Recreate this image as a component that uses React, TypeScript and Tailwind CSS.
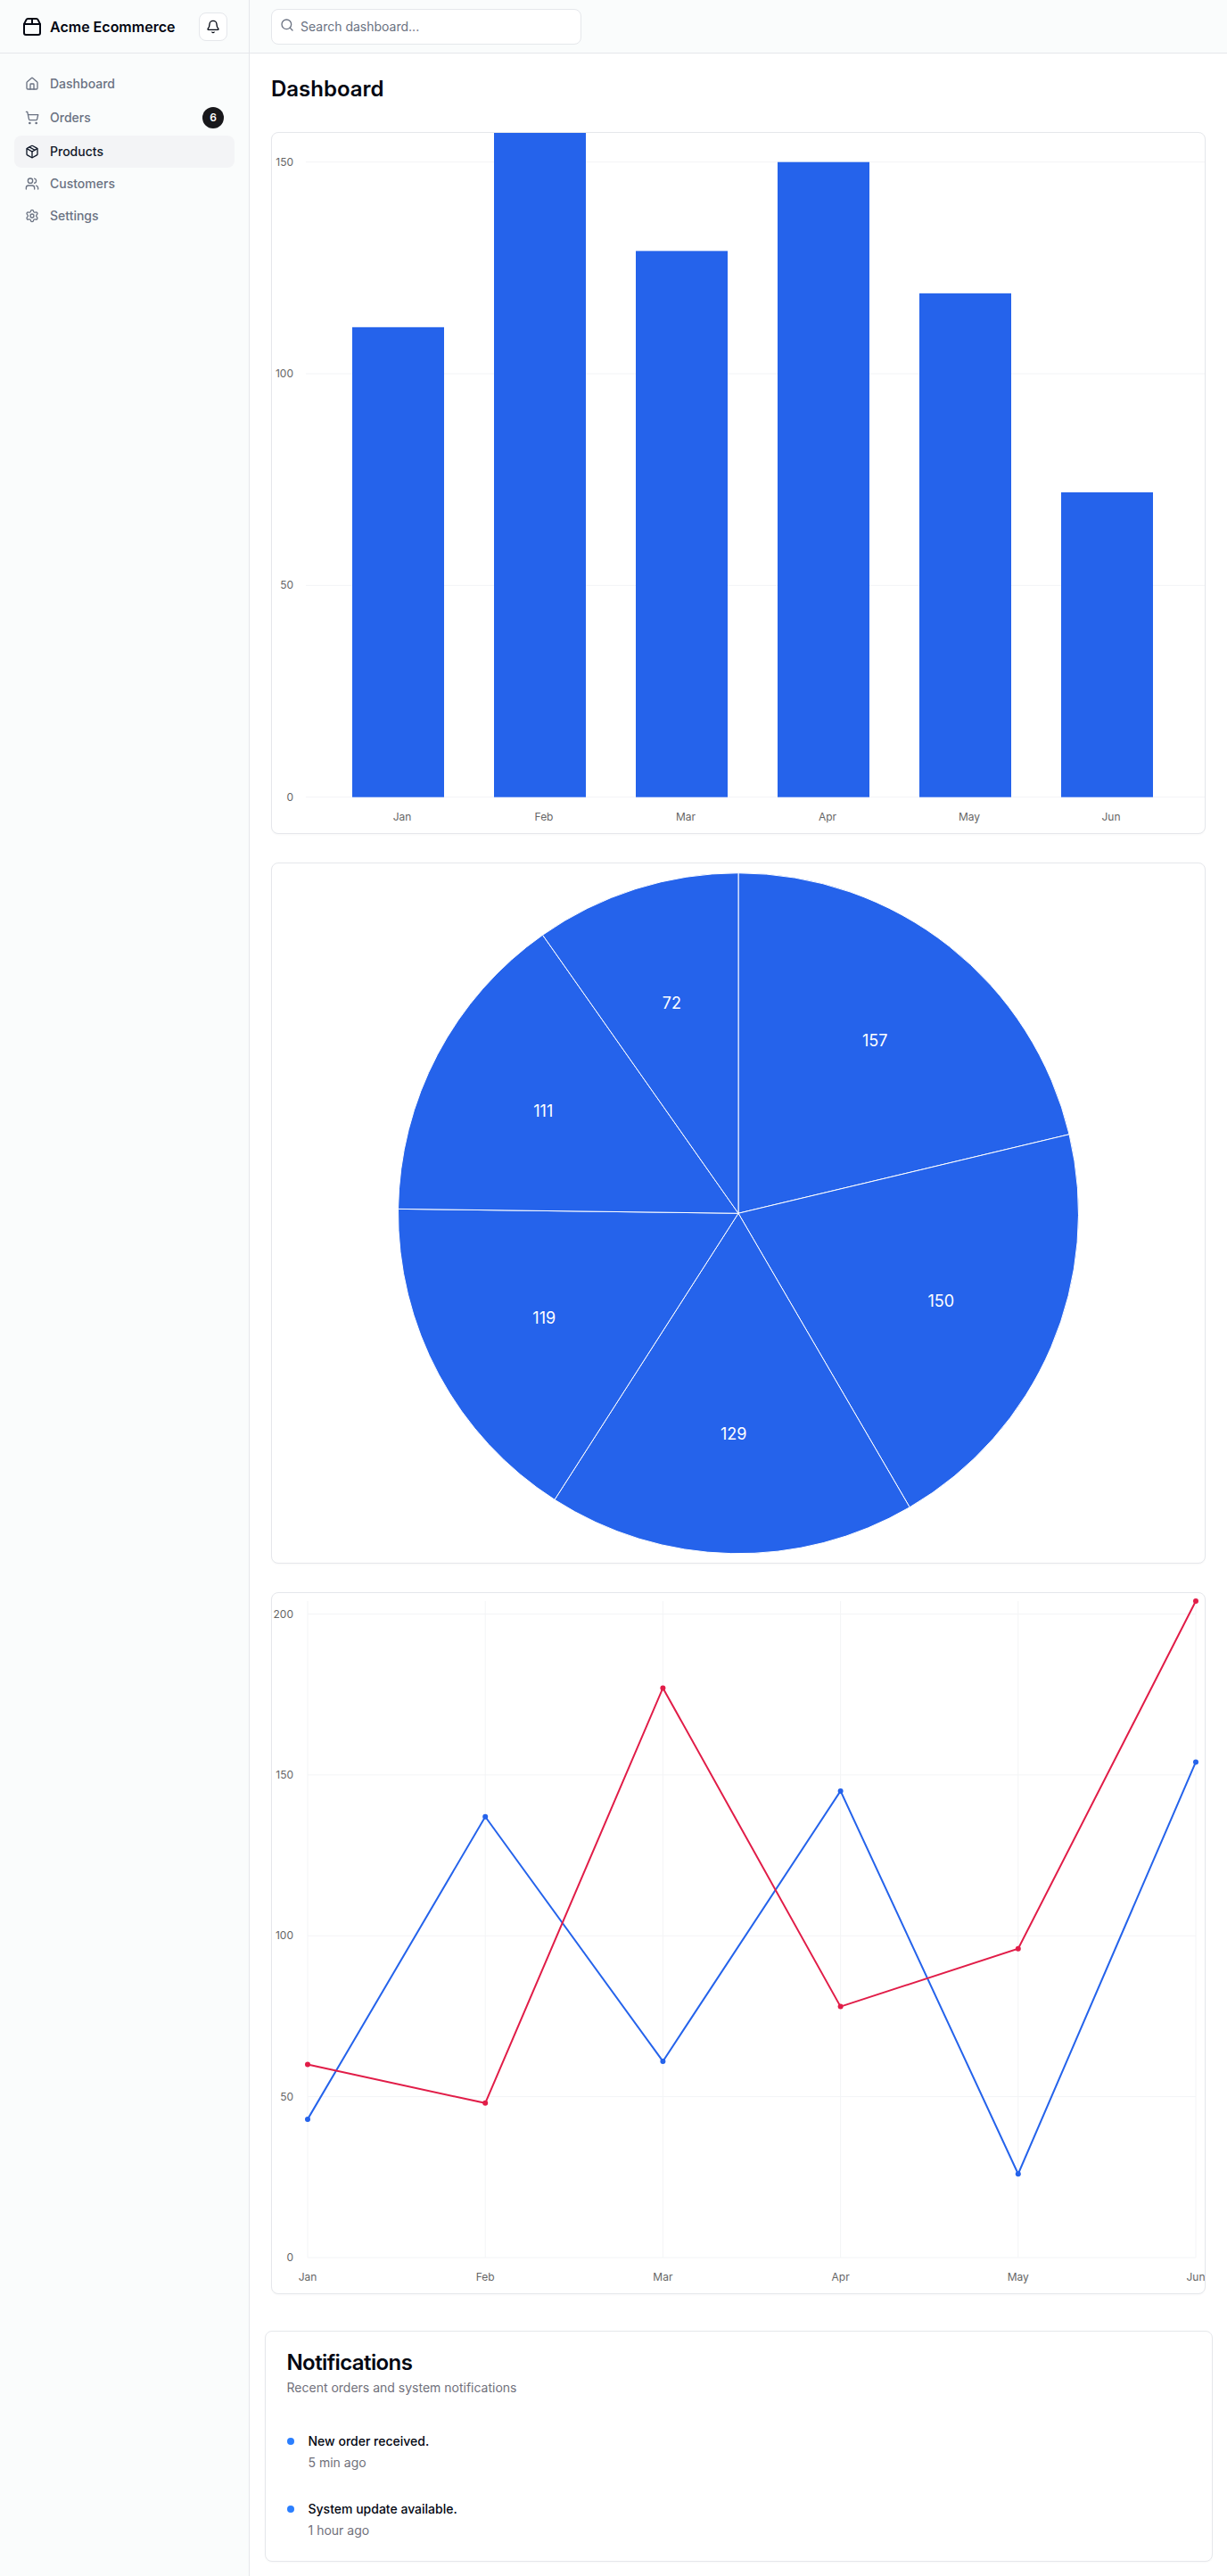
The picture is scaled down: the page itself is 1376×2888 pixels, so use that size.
import React from 'react';
import { Bell, Home, Package, Package2, Search, Settings, ShoppingCart, Users } from 'lucide-react';

const months = ['Jan', 'Feb', 'Mar', 'Apr', 'May', 'Jun'];
const barData = [111, 157, 129, 150, 119, 72];
const pieData = [157, 150, 129, 119, 111, 72];
const blueLine = [43, 137, 61, 145, 26, 154];
const redLine = [60, 48, 177, 78, 96, 204];

const navItems = [
  { label: 'Dashboard', icon: Home },
  { label: 'Orders', icon: ShoppingCart, badge: 6 },
  { label: 'Products', icon: Package, active: true },
  { label: 'Customers', icon: Users },
  { label: 'Settings', icon: Settings },
];

const BarPanel: React.FC = () => {
  const bottom = 744.7;
  const unit = 712 / 150;
  return (
    <svg className="block h-full w-full" viewBox="0 0 1046 784.5">
      {[0, 50, 100, 150].map((tick) => {
        const y = bottom - tick * unit;
        return (
          <g key={tick}>
            <line x1={38} x2={1046} y1={y} y2={y} stroke="#f3f4f6" />
            <text x={24} y={y + 4} textAnchor="end" fontSize={12} fill="#666">
              {tick}
            </text>
          </g>
        );
      })}
      {barData.map((value, i) => (
        <rect key={i} x={90 + i * 159} y={bottom - value * unit} width={103} height={value * unit} fill="#2563eb" />
      ))}
      {months.map((month, i) => (
        <text key={month} x={146 + i * 159} y={771} textAnchor="middle" fontSize={12} fill="#666">
          {month}
        </text>
      ))}
    </svg>
  );
};

const PiePanel: React.FC = () => {
  const cx = 523;
  const cy = 392.25;
  const r = 381.5;
  const total = pieData.reduce((sum, v) => sum + v, 0);
  let angle = 0;
  const slices = pieData.map((value) => {
    const start = angle;
    angle += (value / total) * Math.PI * 2;
    return { value, start, end: angle, mid: (start + angle) / 2 };
  });
  return (
    <svg className="block h-full w-full" viewBox="0 0 1046 784.5">
      {slices.map((s) => (
        <path
          key={s.value}
          d={`M${cx} ${cy}L${cx + r * Math.sin(s.start)} ${cy - r * Math.cos(s.start)}A${r} ${r} 0 ${s.end - s.start > Math.PI ? 1 : 0} 1 ${cx + r * Math.sin(s.end)} ${cy - r * Math.cos(s.end)}Z`}
          fill="#2563eb"
          stroke="#fff"
          strokeWidth={1}
        />
      ))}
      {slices.map((s) => (
        <text
          key={s.value}
          x={cx + 247.3 * Math.sin(s.mid)}
          y={cy - 247.3 * Math.cos(s.mid) + 7}
          textAnchor="middle"
          fontSize={18}
          fill="#fff"
        >
          {s.value}
        </text>
      ))}
    </svg>
  );
};

const LinePanel: React.FC = () => {
  const left = 40;
  const right = 1036;
  const top = 9;
  const bottom = 745;
  const unit = 3.6075;
  const xAt = (i: number) => left + (i * (right - left)) / 5;
  const yAt = (v: number) => bottom - v * unit;
  const series = [
    { values: blueLine, color: '#2563eb' },
    { values: redLine, color: '#e11d48' },
  ];
  return (
    <svg className="block h-full w-full" viewBox="0 0 1046 784.5">
      {months.map((month, i) => (
        <line key={month} x1={xAt(i)} x2={xAt(i)} y1={top} y2={bottom} stroke="#f3f4f6" />
      ))}
      {[0, 50, 100, 150, 200].map((tick) => (
        <g key={tick}>
          <line x1={left} x2={right} y1={yAt(tick)} y2={yAt(tick)} stroke="#f3f4f6" />
          <text x={24} y={yAt(tick) + 4} textAnchor="end" fontSize={12} fill="#666">
            {tick}
          </text>
        </g>
      ))}
      {series.map((s) => (
        <g key={s.color}>
          <polyline
            points={s.values.map((v, i) => `${xAt(i)},${yAt(v)}`).join(' ')}
            fill="none"
            stroke={s.color}
            strokeWidth={2}
          />
          {s.values.map((v, i) => (
            <circle key={i} cx={xAt(i)} cy={yAt(v)} r={3} fill={s.color} />
          ))}
        </g>
      ))}
      {months.map((month, i) => (
        <text key={month} x={xAt(i)} y={771} textAnchor="middle" fontSize={12} fill="#666">
          {month}
        </text>
      ))}
    </svg>
  );
};

const ChartCard: React.FC<{ children: React.ReactNode }> = ({ children }) => (
  <div className="h-[786.5px] overflow-hidden rounded-lg border border-gray-200 bg-white shadow-[0_1px_2px_rgba(0,0,0,0.03)]">
    {children}
  </div>
);

const notifications = [
  { title: 'New order received.', time: '5 min ago' },
  { title: 'System update available.', time: '1 hour ago' },
];

const App: React.FC = () => {
  return (
    <div className="flex min-h-screen bg-white font-['Inter',sans-serif] text-gray-950">
      {/* Sidebar */}
      <aside className="w-[280px] shrink-0 border-r border-gray-200 bg-[#fafcfc]">
        <div className="flex h-[60px] items-center border-b border-gray-200 px-6">
          <div className="flex items-center gap-2 font-semibold">
            <Package2 size={24} />
            <span>Acme Ecommerce</span>
          </div>
          <button className="ml-auto flex h-8 w-8 items-center justify-center rounded-lg border border-gray-200 bg-white">
            <Bell size={16} />
          </button>
        </div>
        <nav className="flex flex-col px-4 py-4 text-sm font-medium">
          {navItems.map((item) => (
            <a
              key={item.label}
              className={
                item.active
                  ? 'flex items-center gap-3 rounded-lg bg-gray-100 px-3 py-2 text-gray-900'
                  : 'flex items-center gap-3 rounded-lg px-3 py-2 text-gray-500'
              }
            >
              <item.icon size={16} />
              {item.label}
              {item.badge && (
                <span className="ml-auto flex h-6 w-6 items-center justify-center rounded-full bg-[#18181b] text-xs font-semibold text-white">
                  {item.badge}
                </span>
              )}
            </a>
          ))}
        </nav>
      </aside>

      <div className="min-w-0 flex-1">
        {/* Top bar */}
        <header className="flex h-[60px] items-center border-b border-gray-200 bg-[#fafcfc] px-6">
          <div className="relative w-[348px]">
            <Search size={16} className="absolute left-2.5 top-2.5 text-gray-500" />
            <input
              type="search"
              placeholder="Search dashboard..."
              className="h-10 w-full rounded-lg border border-gray-200 bg-white pl-8 pr-3 text-sm placeholder:text-gray-500 focus:outline-none"
            />
          </div>
        </header>

        <main className="flex flex-col gap-8 px-6 pb-4 pt-6">
          <h1 className="text-2xl font-semibold">Dashboard</h1>
          <ChartCard>
            <BarPanel />
          </ChartCard>
          <ChartCard>
            <PiePanel />
          </ChartCard>
          <ChartCard>
            <LinePanel />
          </ChartCard>

          {/* Notifications */}
          <section className="-mx-[7.5px] mt-[9px] rounded-lg border border-gray-200 bg-white px-6 pb-6 pt-[23px] shadow-[0_1px_2px_rgba(0,0,0,0.03)]">
            <h2 className="text-2xl leading-6 font-semibold tracking-tight">Notifications</h2>
            <p className="mt-1.5 text-sm text-zinc-500">Recent orders and system notifications</p>
            <div className="mt-[40px] flex flex-col gap-8">
              {notifications.map((n) => (
                <div key={n.title} className="grid grid-cols-[24px_1fr]">
                  <span className="mt-1.5 h-2 w-2 rounded-full bg-blue-500" />
                  <div className="flex flex-col gap-1 text-sm">
                    <p className="font-medium">{n.title}</p>
                    <p className="text-zinc-500">{n.time}</p>
                  </div>
                </div>
              ))}
            </div>
          </section>
        </main>
      </div>
    </div>
  );
};

export default App;
